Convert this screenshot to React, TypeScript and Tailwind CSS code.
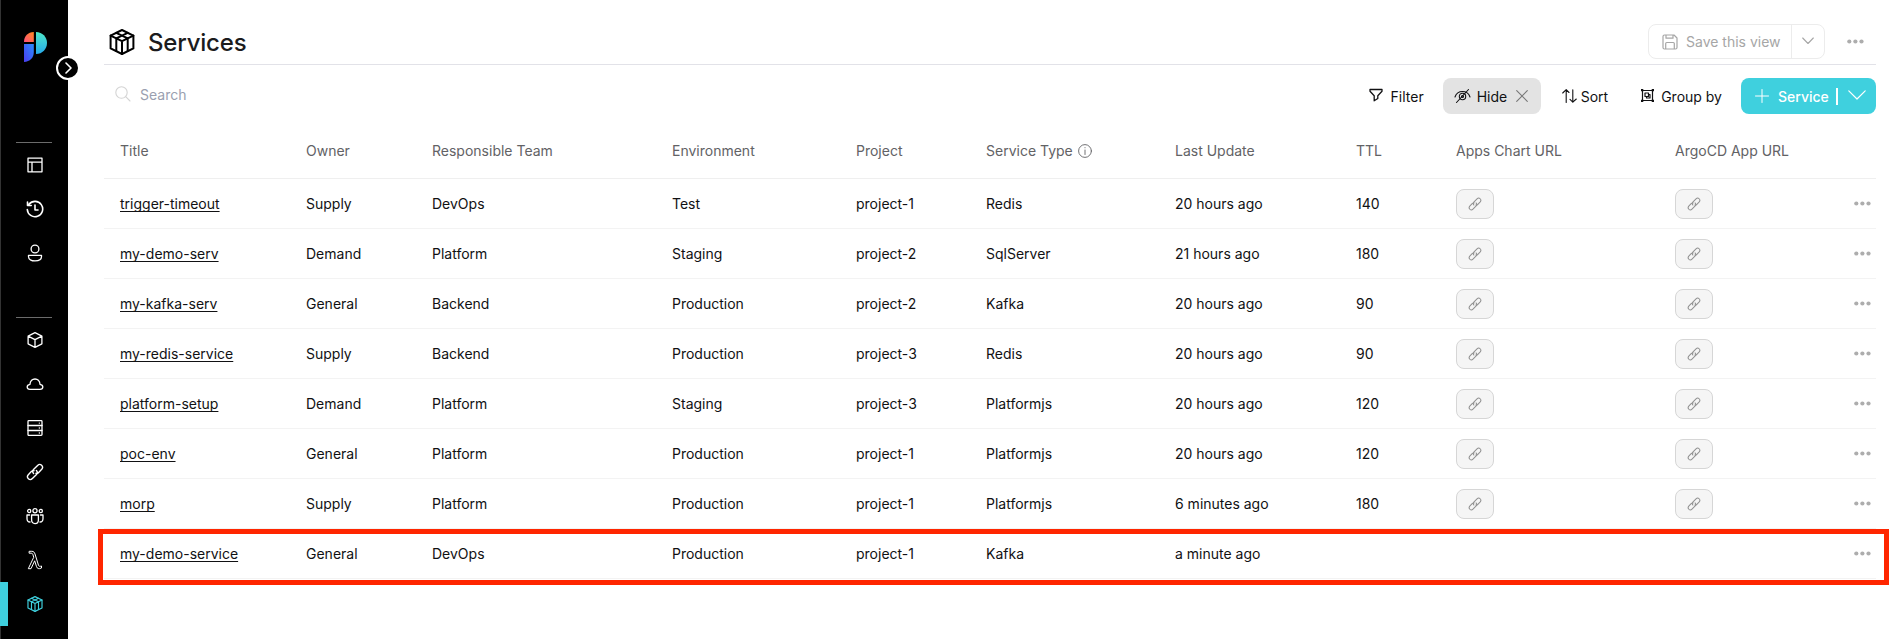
import React from "react";

type IconProps = { className?: string };

const svgBase = {
  fill: "none",
  stroke: "currentColor",
  strokeLinecap: "round" as const,
  strokeLinejoin: "round" as const,
};

function PackageIcon({ className = "", sw = 2 }: IconProps & { sw?: number }) {
  return (
    <svg viewBox="0 0 26 26" className={className} {...svgBase} strokeWidth={sw}>
      <path d="M13 1 24.400 6.600V19.400L13 25 1.600 19.400V6.600Z" />
      <path d="M1.600 6.600 13 12.200 24.400 6.600M13 12.200V25M7.300 3.800 18.700 9.400V22M18.700 3.800 7.300 9.400V22" />
    </svg>
  );
}

function LogoIcon() {
  return (
    <svg viewBox="0 0 23 30" className="h-[30px] w-[23px]">
      <defs>
        <linearGradient id="a" x1="0" y1="1" x2="1" y2="0">
          <stop offset="0" stopColor="#ff4f7b" />
          <stop offset="1" stopColor="#ff8a1f" />
        </linearGradient>
        <linearGradient id="b" x1="0" y1="0" x2="0" y2="1">
          <stop offset="0" stopColor="#4de8c8" />
          <stop offset="1" stopColor="#27a9ea" />
        </linearGradient>
        <linearGradient id="c" x1="1" y1="0" x2="0" y2="1">
          <stop offset="0" stopColor="#2b8cff" />
          <stop offset="1" stopColor="#4a3cf0" />
        </linearGradient>
      </defs>
      <path d="M9.8 0V10H0C0 4 4 .3 9.8 0Z" fill="url(#a)" />
      <path d="M12 0C18.500 0 23 5 23 11S18.500 22 12 22Z" fill="url(#b)" />
      <path d="M0 12H9.800V20C9.800 26 6 29.500 0 30Z" fill="url(#c)" />
    </svg>
  );
}

function LayoutIcon() {
  return (
    <svg viewBox="0 0 18 18" className="size-[18px]" {...svgBase} strokeWidth={1.3}>
      <path d="M2 2.200H16V15.800H2ZM2 6.200H16M6 6.200V15.800" />
    </svg>
  );
}
function HistoryIcon() {
  return (
    <svg viewBox="0 0 18 18" className="size-[18px]" {...svgBase} strokeWidth={1.6}>
      <path d="M1.300 9.500A7.700 7.700 0 1 0 3 4.200M1.500 2V5.500H5.200M9 5V10H12" />
    </svg>
  );
}
function UserIcon() {
  return (
    <svg viewBox="0 0 18 18" className="size-[18px]" {...svgBase} strokeWidth={1.3}>
      <circle cx="9" cy="5" r="3.900" />
      <path d="M2.500 11.300H15.500V12.500C15.500 15.500 12.500 16.900 9 16.900S2.500 15.500 2.500 12.500Z" />
    </svg>
  );
}
function CubeIcon() {
  return (
    <svg viewBox="0 0 18 18" className="size-[18px]" {...svgBase} strokeWidth={1.3}>
      <path d="M9 1.700 15.900 5.200V12.800L9 16.300 2.100 12.800V5.200ZM2.100 5.200 9 8.700 15.900 5.200M9 8.700V16.300" />
    </svg>
  );
}
function CloudIcon() {
  return (
    <svg viewBox="0 0 18 18" className="size-[18px]" {...svgBase} strokeWidth={1.3}>
      <path d="M4 14.300C.3 14.300.2 9.800 4 9.300 4.200 2.200 13.800 2.200 14 9.300 17.800 9.800 17.700 14.300 14 14.300Z" />
    </svg>
  );
}
function ServerIcon() {
  return (
    <svg viewBox="0 0 18 18" className="size-[18px]" {...svgBase} strokeWidth={1.3}>
      <rect x="2" y="1.600" width="14" height="14.800" rx=".8" />
      <path d="M2 6.500H16M2 11.500H16M13.300 4.100H13.400M13.300 9H13.400M13.300 14H13.400" />
    </svg>
  );
}
function LinkIcon({ className = "", sw = 1.3 }: IconProps & { sw?: number }) {
  return (
    <svg viewBox="0 0 18 18" className={className} {...svgBase} strokeWidth={sw}>
      <path d="M7.600 10.400C6.300 9 6.500 7.600 7.500 6.500L11.600 2.400C14.300-.2 18.200 3.300 15.700 6.300L12.700 9.400C11.900 10.200 11 10.500 10 10.300" />
      <path d="M10.400 7.600C11.700 9 11.500 10.400 10.500 11.500L6.400 15.600C3.700 18.200-.2 14.700 2.300 11.700L5.300 8.600C6.100 7.800 7 7.500 8 7.700" />
    </svg>
  );
}
function TeamIcon() {
  return (
    <svg viewBox="0 0 18 18" className="size-[18px]" {...svgBase} strokeWidth={1.3}>
      <circle cx="3.200" cy="4" r="1.600" />
      <circle cx="9" cy="3.700" r="2.100" />
      <circle cx="14.800" cy="4" r="1.600" />
      <path d="M5.600 8H12.400V13C12.400 15.300 11 16.600 9 16.600S5.600 15.300 5.600 13ZM3.600 8H1V11.500C1 13.700 2.200 15 4 15M14.400 8H17V11.500C17 13.700 15.800 15 14 15" />
    </svg>
  );
}
function LambdaIcon() {
  return (
    <svg viewBox="0 0 18 20" className="h-5 w-[18px]" {...svgBase} strokeWidth={1}>
      <path d="M3.500 1.300H5.800C7.800 1.300 8.500 2.500 9 4L12.500 15.300C12.900 16.500 13.800 16.500 15.500 16V18C12.700 19.300 11.200 18.600 10.500 16.600L8.700 10.800 5 18.700H2.300L7.700 7.300 7 4.800C6.600 3.500 6.100 3.200 5 3.200H3.500Z" />
    </svg>
  );
}

function Dots() {
  return (
    <svg viewBox="0 0 17 5" className="h-[5px] w-[17px] text-[#adadad]" fill="currentColor">
      <circle cx="2.300" cy="2.500" r="2.100" />
      <circle cx="8.400" cy="2.500" r="2.100" />
      <circle cx="14.500" cy="2.500" r="2.100" />
    </svg>
  );
}

function NavItem({ children, active = false }: { children: React.ReactNode; active?: boolean }) {
  return (
    <div
      className={
        active
          ? "flex h-11 items-center justify-center border-l-8 border-[#3fd0de] pr-[7px] text-[#3fd0de]"
          : "flex h-11 items-center justify-center pl-px text-white"
      }
    >
      {children}
    </div>
  );
}

function Sidebar() {
  return (
    <aside className="relative flex h-full w-[68px] shrink-0 flex-col bg-black shadow-[inset_1px_0_0_#333]">
      <div className="flex h-[142px] pt-8 pl-6">
        <LogoIcon />
      </div>
      <div className="mx-4 h-px bg-[#6b6b6b]" />
      <div>
        <NavItem><LayoutIcon /></NavItem>
        <NavItem><HistoryIcon /></NavItem>
        <NavItem><UserIcon /></NavItem>
      </div>
      <div className="mx-4 mt-[42px] h-px bg-[#6b6b6b]" />
      <div>
        <NavItem><CubeIcon /></NavItem>
        <NavItem><CloudIcon /></NavItem>
        <NavItem><ServerIcon /></NavItem>
        <NavItem><LinkIcon className="size-[18px]" sw={1.4} /></NavItem>
        <NavItem><TeamIcon /></NavItem>
        <NavItem><LambdaIcon /></NavItem>
        <NavItem active><PackageIcon className="size-4" sw={1.9} /></NavItem>
      </div>
      <button className="absolute top-14 left-14 flex size-6 items-center justify-center rounded-full border-2 border-white bg-black">
        <svg viewBox="0 0 8 12" className="ml-0.5 h-3 w-2 text-white" {...svgBase} strokeWidth={1.6}>
          <path d="M1 1 6 6 1 11" />
        </svg>
      </button>
    </aside>
  );
}

function Header() {
  return (
    <header className="flex h-[65px] items-start border-b border-[#e2e2e8]">
      <PackageIcon className="mt-[29px] ml-[5px] size-[26px] text-black" />
      <h1 className="mt-[26px] ml-[13px] text-[24px] leading-[34px] font-medium tracking-[-0.2px] text-[#1b1b1d]">
        Services
      </h1>
      <div className="mt-6 ml-auto flex h-[35px] rounded-lg border border-[#ececec] text-[#a6a6a6]">
        <button className="flex w-[142px] items-center pl-[13px]">
          <svg viewBox="0 0 16 16" className="size-4" {...svgBase} strokeWidth={1.2}>
            <path d="M2.500 1H12L15 4V13.500A1.500 1.500 0 0 1 13.500 15H2.500A1.500 1.500 0 0 1 1 13.500V2.500A1.500 1.500 0 0 1 2.500 1ZM4 1V4.200H11V1M3.700 15V9.500Q3.700 8.500 4.700 8.500H11.300Q12.300 8.500 12.300 9.500V15" />
          </svg>
          <span className="ml-[8px] text-[14px] whitespace-nowrap">Save this view</span>
        </button>
        <div className="flex w-[33px] items-center justify-center border-l border-[#ececec]">
          <svg viewBox="0 0 12 8" className="-mt-0.5 h-2 w-3" {...svgBase} strokeWidth={1.1}>
            <path d="M.7 1 6 6.500 11.300 1" />
          </svg>
        </div>
      </div>
      <div className="mt-[39px] mr-3 ml-[22px]"><Dots /></div>
    </header>
  );
}

function Toolbar() {
  return (
    <div className="flex h-[62px] items-start pt-[13px] text-[14px] text-[#111113]">
      <div className="flex h-8 items-center pl-[11px]">
        <svg viewBox="0 0 16 16" className="size-4 text-[#d4d4d4]" {...svgBase} strokeWidth={1.1}>
          <circle cx="6.500" cy="6.500" r="5.700" />
          <path d="M10.700 10.700 15 15" />
        </svg>
        <span className="ml-[9px] text-[#9a9fb0]">Search</span>
      </div>
      <div className="ml-auto flex h-9 items-center pr-[19px]">
        <svg viewBox="0 0 14 14" className="-mt-0.5 size-[14px]" {...svgBase} strokeWidth={1.3}>
          <path d="M1 1.500H13V3.300L8.800 7.800V10.500L5.200 12.800V7.800L1 3.300Z" />
        </svg>
        <span className="ml-[8px]">Filter</span>
      </div>
      <div className="flex h-9 w-[98px] items-center rounded-lg bg-[#e3e3e3] pl-[11px]">
        <svg viewBox="0 0 17 16" className="-mt-px h-4 w-[17px]" {...svgBase} strokeWidth={1.1}>
          <path d="M1 9C3.500 1.700 13.500 1.700 16 9M14.500 1.500 2.500 14.500" />
          <circle cx="8.500" cy="8.500" r="3.200" />
          <circle cx="8.500" cy="8.500" r="1" />
        </svg>
        <span className="ml-[6px]">Hide</span>
        <svg viewBox="0 0 12 12" className="ml-[9px] size-3 text-[#777]" {...svgBase} strokeWidth={1.1}>
          <path d="M.7.7 11.300 11.300M11.300.7.7 11.300" />
        </svg>
      </div>
      <div className="ml-[21px] flex h-9 items-center">
        <svg viewBox="0 0 15 14" className="-mt-px h-[14px] w-[15px]" {...svgBase} strokeWidth={1.1}>
          <path d="M4.200 13.500V.7M.7 4 4.200.7 7 3.500M10.800.7V13.200M8 10.400 10.800 13.200 14.300 10" />
        </svg>
        <span className="ml-[4px]">Sort</span>
      </div>
      <div className="ml-[33px] flex h-9 items-center">
        <svg viewBox="0 0 13 13" className="-mt-0.5 size-[13px]" {...svgBase} strokeWidth={1.2}>
          <path d="M1.500 1.500H11.500V11.500H1.500ZM4 4H7.500V7.500H4ZM7.500 5.500H9V9H5.500V7.500" />
          <path d="M0 0H2.300V2.300H0ZM10.700 0H13V2.300H10.700ZM0 10.700H2.300V13H0ZM10.700 10.700H13V13H10.700Z" fill="currentColor" stroke="none" />
        </svg>
        <span className="ml-[7px]">Group by</span>
      </div>
      <button className="ml-[19px] flex h-9 w-[135px] items-center rounded-lg bg-[#3fd0de] pl-[14px] text-white">
        <svg viewBox="0 0 14 14" className="size-[14px]" {...svgBase} strokeWidth={1}>
          <path d="M7 .5V13.500M.5 7H13.500" />
        </svg>
        <span className="ml-[9px] font-medium">Service</span>
        <span className="ml-[7px] h-[17px] w-0.5 bg-white" />
        <svg viewBox="0 0 18 10" className="-mt-0.5 ml-[10px] h-[10px] w-[18px]" {...svgBase} strokeWidth={1.2}>
          <path d="M.8.8 9 9 17.200.8" />
        </svg>
      </button>
    </div>
  );
}

const columns = [
  "Title",
  "Owner",
  "Responsible Team",
  "Environment",
  "Project",
  "Service Type",
  "Last Update",
  "TTL",
  "Apps Chart URL",
  "ArgoCD App URL",
];

const rows = [
  ["trigger-timeout", "Supply", "DevOps", "Test", "project-1", "Redis", "20 hours ago", "140"],
  ["my-demo-serv", "Demand", "Platform", "Staging", "project-2", "SqlServer", "21 hours ago", "180"],
  ["my-kafka-serv", "General", "Backend", "Production", "project-2", "Kafka", "20 hours ago", "90"],
  ["my-redis-service", "Supply", "Backend", "Production", "project-3", "Redis", "20 hours ago", "90"],
  ["platform-setup", "Demand", "Platform", "Staging", "project-3", "Platformjs", "20 hours ago", "120"],
  ["poc-env", "General", "Platform", "Production", "project-1", "Platformjs", "20 hours ago", "120"],
  ["morp", "Supply", "Platform", "Production", "project-1", "Platformjs", "6 minutes ago", "180"],
  ["my-demo-service", "General", "DevOps", "Production", "project-1", "Kafka", "a minute ago", ""],
];

const gridCols = "grid grid-cols-[186px_126px_240px_184px_130px_189px_181px_100px_219px_1fr_38px]";

function LinkChip() {
  return (
    <button className="flex h-[30px] w-[38px] items-center justify-center rounded-lg border border-[#d6d6d6] bg-[#f5f5f5] text-[#909090]">
      <LinkIcon className="size-[14px]" sw={1.3} />
    </button>
  );
}

function Table() {
  return (
    <div className="text-[14px] text-[#111113]">
      <div className={`${gridCols} h-[52px] items-start border-b border-[#efefef] pt-3.5 text-[#626265]`}>
        {columns.map((c) => (
          <div key={c} className="flex items-center pl-4 leading-5 whitespace-nowrap">
            {c}
            {c === "Service Type" && (
              <svg viewBox="0 0 14 14" className="ml-[5px] size-[14px]" {...svgBase} strokeWidth={0.9}>
                <circle cx="7" cy="7" r="6.400" />
                <path d="M7 6V10.500M7 3.600V3.800" />
              </svg>
            )}
          </div>
        ))}
      </div>
      {rows.map((r) => (
        <div key={r[0]} className={`${gridCols} h-[50px] items-center border-b border-[#f3f3f3]`}>
          {r.map((v, i) => (
            <div key={i} className="pl-4 whitespace-nowrap">
              {i === 0 ? <a className="underline underline-offset-2 [text-decoration-skip-ink:none]">{v}</a> : v}
            </div>
          ))}
          <div className="pl-4">{r[7] && <LinkChip />}</div>
          <div className="pl-4">{r[7] && <LinkChip />}</div>
          <div className="pl-4"><Dots /></div>
        </div>
      ))}
    </div>
  );
}

export default function App() {
  return (
    <div className="flex h-[639px] w-full overflow-hidden bg-white font-['Inter',sans-serif]">
      <Sidebar />
      <main className="relative flex-1 pr-[22px] pl-9">
        <Header />
        <Toolbar />
        <Table />
        <div className="pointer-events-none absolute top-[529px] left-[30px] h-14 w-[1791px] border-[5px] border-[#ff2600]" />
      </main>
    </div>
  );
}
